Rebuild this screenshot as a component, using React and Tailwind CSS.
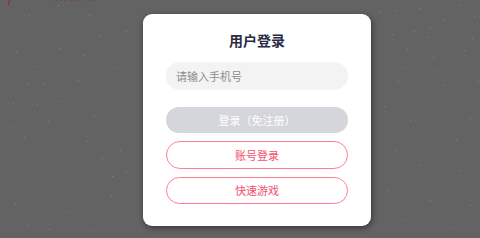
import React from "react";

const dots = [
  [29,15],[58,5],[89,15],[99,36],[126,31],[60,48],[16,52],[84,55],[34,66],[27,84],[44,84],[78,80],[117,67],[13,103],[37,104],[58,101],[13,126],[48,121],[24,137],[94,116],[102,158],[120,150],[87,141],[112,176],[69,211],[111,195],[15,203],[27,225],[93,230],[49,229],[126,172],
  [392,34],[414,31],[430,28],[428,37],[472,38],[464,50],[407,49],[433,57],[402,67],[437,70],[398,81],[443,85],[478,81],[384,106],[410,120],[470,118],[456,140],[395,150],[420,165],[460,170],[388,190],[430,200],[470,205],[405,220],[450,228],[380,12],[420,8],[460,5],[474,16],[395,10],[444,20]
];

const marks = [52,56,60,64,70,74,78,84,88,92];

export default function App() {
  return (
    <div className="relative w-[480px] h-[238px] overflow-hidden bg-[#636363] pl-[143px] pt-[14px] font-['Noto_Sans_CJK_SC',sans-serif]">
      <svg className="absolute inset-0" width="480" height="238" viewBox="0 0 480 238">
        {dots.map(([x, y], i) => (
          <rect key={i} x={x} y={y} width="1" height="1" fill="#838383" />
        ))}
        {marks.map((x, i) => (
          <rect key={"m" + i} x={x} y="0" width="2" height="1" fill="#7a4b52" />
        ))}
        <path d="M9 0 L10 0 L9 5 L8 5 Z" fill="#8a2a35" />
      </svg>
      <div className="relative flex flex-col items-center w-[228px] h-[212px] bg-white rounded-[9px] shadow-[1px_2px_6px_rgba(0,0,0,0.45)] pt-[16px] px-[23px]">
        <div className="text-[14px] leading-[20px] font-bold text-[#2a2b45]">用户登录</div>
        <div className="mt-[12px] w-[182px] h-[28px] rounded-full bg-[#f3f3f4] flex items-center pl-[10px] text-[11px] text-[#8d8d8d]">
          请输入手机号
        </div>
        <div className="mt-[17px] w-[182px] h-[26px] rounded-full bg-[#d5d6db] flex items-center justify-center text-[11px] text-white">
          登录（免注册）
        </div>
        <div className="mt-[8px] w-[182px] h-[28px] rounded-full border border-[#ff7f92] flex items-center justify-center text-[11px] text-[#f2506e]">
          账号登录
        </div>
        <div className="mt-[8px] w-[182px] h-[27px] rounded-full border border-[#ff7f92] flex items-center justify-center text-[11px] text-[#f2506e]">
          快速游戏
        </div>
      </div>
    </div>
  );
}
